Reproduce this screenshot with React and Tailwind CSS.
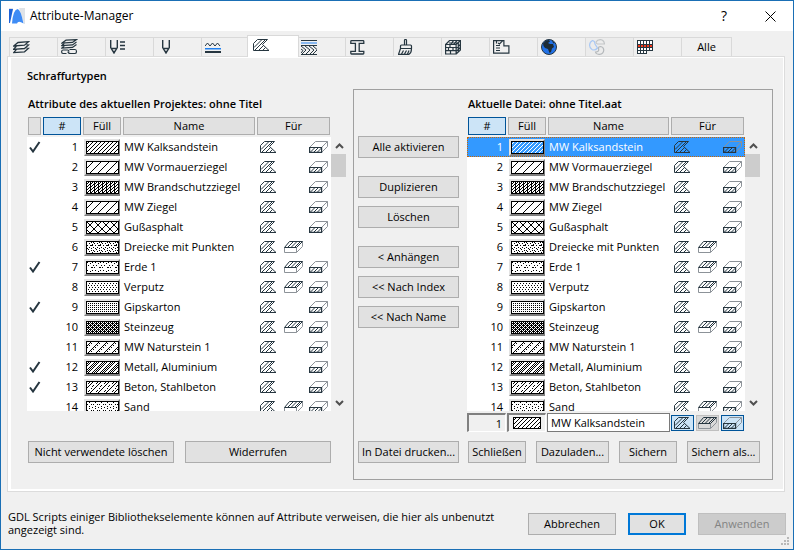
import React, { useState } from "react";
import clsx from "clsx";

// hatch tiles, repeated over the swatch. '#' is a drawn pixel
const TILES = {
    narrow: ["...#", "..#.", ".#..", "#..."],
    wide: [".......#", "......#.", ".....#..", "....#...", "...#....", "..#.....", ".#......", "#......."],
    fire: ["#..#", "#.#.", "##..", "#..#", "#.#.", "##.."],
    cross: ["#......#", ".#....#.", "..#..#..", "...##...", "...##...", "..#..#..", ".#....#.", "#......#"],
    triangles: ["..#.....", ".....#.#", "#..#....", "......#.", ".#..###.", "........", "...#...#", ".#...#.."],
    earth: ["........", ".#....#.", "....#...", "........", "..#....#", "........", "#....##.", "........"],
    plaster: ["..#", "...", "#..", "..."],
    gypsum: ["#.", ".."],
    stone: ["##.#", "#.#.", ".###", "#.#."],
    natural: [".....#.#", "....#...", "...#.#..", "..#.....", ".#.#....", "#.......", ".#.....#", "......#."],
    metal: [".#.#.#..", "#.#.#...", ".#.#...#", "#.#...#.", ".#...#.#", "#...#.#.", "...#.#.#", "..#.#.#."],
    concrete: [".......#", "...#..#.", "..#..#..", "....#...", "...#...#", "..#...#.", ".#......", "#....#.."],
    sand: ["#.....", "...#..", "......", ".#...#", "......", "...#.."],
};

const ATTRIBUTES = [
    { id: 1, name: "MW Kalksandstein", tile: "narrow", used: true, cut: true },
    { id: 2, name: "MW Vormauerziegel", tile: "wide", cut: true },
    { id: 3, name: "MW Brandschutzziegel", tile: "fire", cut: true },
    { id: 4, name: "MW Ziegel", tile: "wide", cut: true },
    { id: 5, name: "Gußasphalt", tile: "cross", cut: true },
    { id: 6, name: "Dreiecke mit Punkten", tile: "triangles", cover: true },
    { id: 7, name: "Erde 1", tile: "earth", used: true, cover: true, cut: true },
    { id: 8, name: "Verputz", tile: "plaster", cover: true, cut: true },
    { id: 9, name: "Gipskarton", tile: "gypsum", used: true, cut: true },
    { id: 10, name: "Steinzeug", tile: "stone", cover: true, cut: true },
    { id: 11, name: "MW Naturstein 1", tile: "natural", cut: true },
    { id: 12, name: "Metall, Aluminium", tile: "metal", used: true, cut: true },
    { id: 13, name: "Beton, Stahlbeton", tile: "concrete", used: true, cut: true },
    { id: 14, name: "Sand", tile: "sand", cover: true, cut: true },
];

function tilePath(tile, w, h) {
    let d = "";
    for (let y = 1; y < h - 1; y++) {
        for (let x = 1; x < w - 1; x++) {
            const line = tile[y % tile.length];
            if (line[x % line.length] === "#") d += `M${x} ${y}h1v1h-1z`;
        }
    }
    return d;
}

function Swatch({ tile, width = 33, height = 13, selected }) {
    return (
        <svg width={width} height={height} shapeRendering="crispEdges" className={clsx("block", selected ? "text-white" : "text-black")}>
            <rect width={width} height={height} fill="#000" />
            <rect x="1" y="1" width={width - 2} height={height - 2} fill={selected ? "#3399ff" : "#fff"} />
            <path d={tilePath(TILES[tile], width, height)} fill="currentColor" />
        </svg>
    );
}

function HatchIcon() {
    return (
        <svg width="17" height="12" viewBox="0 0 17 12" fill="none" stroke="#263640" className="block">
            <path d="M.5 11.5v-7l4-4h10l-5 5 6.500 6z" />
            <path d="M1 8.500L9 .5M1.500 11.500l11-11M5.500 11.500l5-5M9.500 11.500l3-3" />
        </svg>
    );
}

function CoverIcon() {
    return (
        <svg width="19" height="12" viewBox="0 0 19 12" fill="none" className="block">
            <path stroke="#8c9298" d="M.5 6.500v5h12v-5M12.500 11.500l6-6v-5" />
            <path stroke="#263640" d="M.5 6.500l5-6h13l-6 6zM4 6l5-5M7.500 6l5-5M11 6l5-5" />
        </svg>
    );
}

function CutIcon() {
    return (
        <svg width="19" height="12" viewBox="0 0 19 12" fill="none" className="block">
            <path stroke="#8c9298" d="M.5 6.500l6-6h12l-6 6M18.500.5v5l-6 6" />
            <path stroke="#263640" strokeWidth="1.2" d="M.6 6.500h12v4.900H.6z" />
            <path stroke="#263640" d="M1.500 11l4-4M5 11l4-4M8.500 11l4-4" />
        </svg>
    );
}

function CheckMark() {
    return (
        <svg width="12" height="12" viewBox="0 0 12 12" fill="none" className="pointer-events-none col-start-1 row-start-1">
            <path stroke="#263640" strokeWidth="2" d="M1 6.5l3 4L10.5 1" />
        </svg>
    );
}

const PEN = "M.7 0v7.500L4 13l3.300-5.500V0M.7 8.500h6.600M3 11.500h2";

const TABS = [
    {
        label: "Ebenen",
        icon: <svg width="17" height="13" fill="none" stroke="#263640" strokeWidth="1.3">
            <path d="M5 1.500L15.500.7 11.500 4.200.7 5zM3.500 5L.7 8.300l10.800-.8 4-3.500-2-.1M3.500 8.300L.7 11.600l10.800-.8 4-3.500-2-.1" />
        </svg>,
    },
    {
        label: "Ebenenkombinationen",
        icon: <svg width="17" height="16" fill="none" stroke="#263640" strokeWidth="1.2">
            <path d="M5 1.200L15.500.6 11.500 3.400.7 4.200zM3.500 4.200L.7 6.700l10.800-.8 4-2.800M3.500 6.700L.7 9.200l10.800-.8 4-2.800" />
            <path d="M5.500 14.500H2q-1.400 0-1.400-1.700T2 11h4.500Q8 11 8 12.500M8.500 10.500h5.500q1.500 0 1.500 2t-1.500 2H9.500Q7 14.500 7 12.500" />
        </svg>,
    },
    {
        label: "Stiftsets",
        icon: <svg width="16" height="14" fill="none" stroke="#263640" strokeWidth="1.4"><path d={PEN} /><path d="M10 2h5M10 5.500h5M10 9h5" /></svg>,
        pad: "pl-1",
    },
    {
        label: "Stifte",
        icon: <svg width="9" height="14" fill="none" stroke="#263640" strokeWidth="1.4"><path d={PEN} /></svg>,
        pad: "pl-2",
    },
    {
        label: "Linientypen",
        icon: <svg width="16" height="11" fill="none">
            <path stroke="#263640" d="M0 4l2.500-3 2.500 3 2.500-3L10 4l2.500-3L15 4" />
            <path fill="#2080f0" d="M0 6h16v1.500H0z" />
            <path fill="#263640" d="M0 9h16v2H0z" />
        </svg>,
    },
    { label: "Schraffurtypen", icon: <HatchIcon /> },
    {
        label: "Mehrschichtige Bauteile",
        icon: <svg width="16" height="15" fill="none" stroke="#263640">
            <path d="M0 .5h16M0 5.500h16M0 14.500h16" />
            <path stroke="#2080f0" d="M0 3h16" />
            <path d="M0 9l2 1.500L0 13M0 6l5 4-4 4M4 6l5 4-4 4M8 6l5 4-4 4M12 6l4 3.500M12 14l4-4" />
        </svg>,
    },
    {
        label: "Profile",
        icon: <svg width="15" height="15" fill="none" stroke="#263640" strokeWidth="1.3">
            <path d="M1.500.7h11.600q.7 0 .7.700V3.300H9.200v8h4.600v2q0 .7-.7.700H1.500q-.7 0-.7-.7v-2h4.600v-8H.8V1.400q0-.7.700-.7z" />
        </svg>,
        pad: "pl-1",
    },
    {
        label: "Oberflächen",
        icon: <svg width="16" height="16" fill="none" stroke="#263640" strokeWidth="1.2">
            <path d="M6.500 6V1.200Q6.500.5 7.500.5t1 .7V6M2.500 9.500V7q0-1 1-1h9q1 0 1 1v2.500M2.500 9.500h11M2.500 9.500L.5 15.300h10.500q2.500-1.500 2.500-5.800M3.500 15l2-3.500M6.500 15l2-3.500M9.500 15l1.500-3.500" />
        </svg>,
        pad: "pl-1",
    },
    {
        label: "Baustoffe",
        icon: <svg width="16" height="15" fill="none" stroke="#263640" strokeWidth="1.2">
            <path d="M.6 4.500h10.500v9.500H.6zM.6 7.500h10.500M.6 10.700h10.500M5 4.500v3M8 7.500v3M3.500 7.500v3M5.500 10.700V14M.6 4.500l4-4h10.800l-4.300 4M15.400.6v9.400L11.100 14M4 3h9M8.500.6L6 4M12 .6L9 4M13.300 2.500V12M11 8.500l4.300-4M11 11.500l4.300-4" />
        </svg>,
    },
    {
        label: "Raumkategorien",
        icon: <svg width="17" height="14" fill="none" stroke="#263640" strokeWidth="1.2">
            <path d="M.6.6h10.300v5.300h5v7.300H.6z" />
            <path d="M3 5.500h4M3 8h4M3 10.500h4M3.500 1v2.500M5 3l1.500 1L9.500.8" />
        </svg>,
    },
    {
        label: "Städte",
        icon: <svg width="16" height="16">
            <circle cx="8" cy="8" r="7.500" fill="#2272e8" stroke="#263640" />
            <path fill="#1d2c36" d="M2 4.500L5 1.500 8 1l1 1.500L7 4l2 1h3l1 3-2 1.500L10 13 8.500 14 7 10 4 9 2.500 7zM10.500 1.500L14 4l-1.500.5z" />
        </svg>,
    },
    {
        label: "MEP-Systeme",
        icon: <svg width="16" height="16" fill="none" strokeWidth="1.2">
            <path stroke="#a9c8f4" d="M3.500 1.500Q6 2 6 5l2.500 4Q6 12 3 10.500.5 9 .6 6T3.500 1.500z" />
            <path stroke="#c3c6c8" d="M7 3Q8.500.5 11.500.6 15 1 15.500 5H8.500Q7 4.500 7 3z" />
            <path stroke="#b4b8bb" d="M11.500 7.500q3 .3 3.300 3.500-.3 4-4.300 4.300Q7 15.500 6.500 13q4 0 3-3.500 0-2 2-2z" />
        </svg>,
        disabled: true,
    },
    {
        label: "Operationsprofile",
        icon: <svg width="16" height="14" shapeRendering="crispEdges">
            <path fill="#263640" d="M0 0h16v11h-6v3H0z" />
            <path fill="#fff" d="M1 1h2v3H1zM4 1h2v3H4zM7 1h2v3H7zM10 1h2v3h-2zM13 1h2v3h-2zM1 8h2v2H1zM4 8h2v2H4zM7 8h2v2H7zM10 8h2v2h-2zM13 8h2v2h-2zM1 11h2v2H1zM4 11h2v2H4zM7 11h2v2H7z" />
            <path fill="#f03a1c" d="M1 5h2v2H1zM4 5h2v2H4zM7 5h2v2H7zM10 5h2v2h-2zM13 5h2v2h-2z" />
        </svg>,
    },
];

const GREY = "border-[#adadad] bg-[#e1e1e1]";

function Button({ className, ...props }) {
    return <button type="button" className={clsx("h-[22px] border text-center whitespace-nowrap", className ?? GREY)} {...props} />;
}

function Head({ children, active, label }) {
    return (
        <th className="p-0 font-normal">
            <button type="button" aria-label={label} className={clsx("block h-[18px] w-full border leading-4", active ? "border-[#005499] bg-[#cce4f7]" : GREY)}>
                {children}
            </button>
        </th>
    );
}

function Arrow({ down }) {
    return (
        <svg width="9" height="6" viewBox="0 0 9 6" fill="none" stroke="#505050" strokeWidth="2">
            <path d={down ? "M1 1l3.500 3.500L8 1" : "M1 5l3.500-3.500L8 5"} />
        </svg>
    );
}

function Scrollbar() {
    return (
        <div className="mt-5 flex h-[274px] w-4 shrink-0 flex-col">
            <button type="button" aria-label="Nach oben" className="flex h-[17px] items-center justify-center"><Arrow /></button>
            <div className="mr-px h-[23px] bg-[#cdcdcd]" />
            <div className="grow" />
            <button type="button" aria-label="Nach unten" className="flex h-[17px] items-center justify-center"><Arrow down /></button>
        </div>
    );
}

function AttributeList({ title, checks, selected, onSelect }) {
    const cols = checks ? "grid-cols-[13px_38px_38px_minmax(0,1fr)_73px]" : "grid-cols-[38px_38px_minmax(0,1fr)_73px]";

    return <>
        <h2 className="mb-1 pl-px leading-[18px] font-semibold whitespace-nowrap">{title}</h2>
        <div className="flex">
            <table aria-label={title} className="block min-w-0 grow">
                <thead className="mb-0.5 block">
                    <tr className={clsx("grid gap-0.5 px-px", cols)}>
                        {checks && <Head label="Verwendet" />}
                        <Head active>#</Head>
                        <Head>Füll</Head>
                        <Head>Name</Head>
                        <Head>Für</Head>
                    </tr>
                </thead>
                <tbody className="block h-[274px] overflow-hidden bg-white">
                    {ATTRIBUTES.map((a) => {
                        const sel = a.id === selected;
                        return (
                            <tr
                                key={a.id}
                                onClick={() => onSelect?.(a.id)}
                                className={clsx("grid h-5 items-center gap-0.5 px-px", cols, sel && "bg-[#3399ff] text-white outline-1 -outline-offset-1 outline-dotted outline-[#cc6600]")}
                            >
                                {checks && <td className="p-0">
                                    <label className="grid h-4 items-center justify-items-center">
                                        <input type="checkbox" defaultChecked={a.used} aria-label={a.name} className="col-start-1 row-start-1 h-full w-full appearance-none" />
                                        {a.used && <CheckMark />}
                                    </label>
                                </td>}
                                <td className="p-0 pr-[3px] text-right">{a.id}</td>
                                <td className="p-0">
                                    <div className={clsx("mx-px border-2 border-t-[#e3e3e3] border-r-[#808080] border-b-[#808080] border-l-[#e3e3e3]", sel ? "bg-[#3399ff]" : "bg-white")}>
                                        <Swatch tile={a.tile} selected={sel} />
                                    </div>
                                </td>
                                <td className="p-0 pl-px whitespace-nowrap">{a.name}</td>
                                <td className="grid grid-cols-[24px_25px_19px] items-center p-0 pl-[3px]">
                                    <HatchIcon />
                                    <span>{a.cover && <CoverIcon />}</span>
                                    <span>{a.cut && <CutIcon />}</span>
                                </td>
                            </tr>
                        );
                    })}
                </tbody>
            </table>
            <Scrollbar />
        </div>
    </>;
}

function Toggle({ label, pressed, children }) {
    return (
        <button
            type="button"
            aria-label={label}
            aria-pressed={pressed}
            className={clsx("flex h-4 w-[23px] items-center justify-center border", pressed ? "border-[#005499] bg-[#cce4f7]" : "border-[#bfbfbf] bg-[#d9d9d9]")}
        >
            {children}
        </button>
    );
}

export default function App() {
    const [tab, setTab] = useState("Schraffurtypen");
    const [selected, setSelected] = useState(1);
    const current = ATTRIBUTES.find((a) => a.id === selected);

    return (
        <div className="relative flex min-h-screen flex-col border border-[#1a6fb5] bg-[#f0f0f0] font-['Open_Sans','Noto_Sans',sans-serif] text-[11px] leading-4 text-black">
            <header className="flex h-[30px] items-center bg-white pl-2">
                <svg width="16" height="16" viewBox="0 0 16 16">
                    <path fill="#dfe3e7" d="M0 0h16v16H0z" />
                    <path fill="#fff" d="M4 0h6l5 16H0z" />
                    <path fill="#1c62d8" d="M0 1h4L1 15H0z" />
                    <path fill="#3f8cf5" d="M3 15.500Q4 2 8.500 1q3 0 6 14.500Q9 12 8 15.500z" />
                </svg>
                <h1 className="grow pl-[5px] text-[12px]">Attribute-Manager</h1>
                <button type="button" aria-label="Hilfe" className="w-[46px] text-center text-[14px] font-medium">?</button>
                <button type="button" aria-label="Schließen" className="flex w-[46px] justify-center">
                    <svg width="11" height="11" stroke="#000"><path d="M.5.5l10 10M10.500.5l-10 10" /></svg>
                </button>
            </header>

            <nav role="tablist" className="flex h-[25px] items-end pl-2">
                {TABS.map((t) => {
                    const active = t.label === tab;
                    return (
                        <button
                            key={t.label}
                            type="button"
                            role="tab"
                            aria-selected={active}
                            aria-label={t.label}
                            disabled={t.disabled}
                            onClick={() => setTab(t.label)}
                            className={clsx(
                                "flex items-center border-t border-l border-[#d9d9d9]",
                                active ? "z-10 -mx-0.5 -mb-px h-[22px] w-[52px] border-r bg-white pb-1 pl-[5px]" : ["h-[19px] w-12", t.pad ?? "pl-[3px]"],
                                t.disabled && "bg-[#ececec]"
                            )}
                        >
                            {t.icon}
                        </button>
                    );
                })}
                <button type="button" role="tab" aria-selected={false} className="h-[19px] w-[51px] border border-b-0 border-[#d9d9d9]">Alle</button>
            </nav>

            <main className="mr-2 ml-1.5 border border-[#dcdcdc]">
                <div className="border-t border-r border-b-2 border-l-[3px] border-white bg-[#f0f0f0] pt-[9px] pr-2.5 pb-[9px] pl-4">
                    <h2 className="mb-1 leading-[18px] font-semibold">{tab}</h2>
                    <div className="flex gap-1.5">
                        <section className="flex min-w-0 grow basis-[320px] flex-col pt-1.5">
                            <AttributeList title="Attribute des aktuellen Projektes: ohne Titel" checks />
                            <div className="mt-[30px] mr-4 ml-px flex gap-[11px]">
                                <Button className={clsx(GREY, "flex-1")}>Nicht verwendete löschen</Button>
                                <Button className={clsx(GREY, "flex-1")}>Widerrufen</Button>
                            </div>
                        </section>

                        <section className="flex min-w-0 grow basis-[420px] gap-2 border border-[#a0a0a0] pt-[5px] pr-[11px] pb-4 pl-1">
                            <div className="flex w-[101px] shrink-0 flex-col pt-[41px]">
                                <Button>Alle aktivieren</Button>
                                <div className="mt-[18px] flex flex-col gap-2">
                                    <Button>Duplizieren</Button>
                                    <Button>Löschen</Button>
                                </div>
                                <div className="mt-[18px] flex flex-col gap-2">
                                    <Button>&lt; Anhängen</Button>
                                    <Button>&lt;&lt; Nach Index</Button>
                                    <Button>&lt;&lt; Nach Name</Button>
                                </div>
                                <Button className={clsx(GREY, "mt-auto")}>In Datei drucken...</Button>
                            </div>

                            <div className="min-w-0 grow">
                                <AttributeList title="Aktuelle Datei: ohne Titel.aat" selected={selected} onSelect={setSelected} />
                                <div className="mt-0.5 mr-4 grid h-[19px] grid-cols-[39px_39px_minmax(0,1fr)_73px] items-center gap-px pr-px">
                                    <input aria-label="Index" readOnly value={current.id} className="h-full w-full border-t-2 border-r border-b border-l-2 border-t-[#808080] border-r-white border-b-white border-l-[#808080] bg-[#f0f0f0] pr-[3px] text-right" />
                                    <button type="button" aria-label="Schraffur" className="flex h-full items-center justify-center border-t-2 border-r border-b border-l-2 border-t-[#808080] border-r-white border-b-white border-l-[#808080]">
                                        <Swatch tile={current.tile} width={28} height={12} />
                                    </button>
                                    <input aria-label="Name" key={current.id} defaultValue={current.name} className="h-full w-full border border-[#7a7a7a] bg-white pl-[3px]" />
                                    <div className="flex justify-between">
                                        <Toggle label="Zeichnungsschraffur" pressed><HatchIcon /></Toggle>
                                        <Toggle label="Deckschraffur" pressed={!!current.cover}><CoverIcon /></Toggle>
                                        <Toggle label="Schnittschraffur" pressed={!!current.cut}><CutIcon /></Toggle>
                                    </div>
                                </div>
                                <div className="mt-[9px] mr-px ml-px flex justify-between">
                                    <Button className={clsx(GREY, "w-[58px]")}>Schließen</Button>
                                    <Button className={clsx(GREY, "w-[73px]")}>Dazuladen...</Button>
                                    <Button className={clsx(GREY, "w-[58px]")}>Sichern</Button>
                                    <Button className={clsx(GREY, "w-[73px]")}>Sichern als...</Button>
                                </div>
                            </div>
                        </section>
                    </div>
                </div>
            </main>

            <footer className="flex grow items-start pt-[18px] pl-[7px]">
                <p className="min-w-0 grow leading-[13px]">
                    GDL Scripts einiger Bibliothekselemente können auf Attribute verweisen, die hier als unbenutzt<br />angezeigt sind.
                </p>
                <div className="mt-[3px] mr-[7px] flex shrink-0 gap-3">
                    <Button className={clsx(GREY, "w-[88px]")}>Abbrechen</Button>
                    <Button className="w-[58px] border-2 border-[#0078d7] bg-[#e1e1e1]">OK</Button>
                    <Button disabled className="w-[88px] border-[#bfbfbf] bg-[#cccccc] text-[#838383]">Anwenden</Button>
                </div>
            </footer>
            <svg width="8" height="8" fill="#b8b8b8" className="absolute right-1 bottom-1">
                <path d="M6 0h2v2H6zM3 3h2v2H3zM6 3h2v2H6zM0 6h2v2H0zM3 6h2v2H3zM6 6h2v2H6z" />
            </svg>
        </div>
    );
}
